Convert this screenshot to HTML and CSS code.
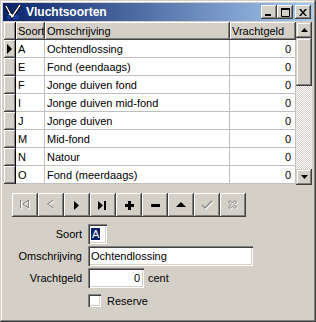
FILE: index.html
```html
<!DOCTYPE html>
<html lang="nl">
<head>
    <meta charset="UTF-8">
    <title>Vluchtsoorten</title>
    <link rel="stylesheet" href="styles.css">
</head>
<body>
    <div class="window">
        <div class="titlebar">
            <svg class="app-icon" width="16" height="16" viewBox="0 0 16 16">
                <ellipse cx="8" cy="13" rx="6" ry="2.5" fill="#1c3fa8"/>
                <path d="M1 2 L7 13 L15 1" fill="none" stroke="#000" stroke-width="3"/>
                <path d="M1 2 L7 13 L15 1" fill="none" stroke="#fff" stroke-width="1.4"/>
                <path d="M4 10 L9 12" stroke="#fff" stroke-width="1.5"/>
            </svg>
            <span class="title">Vluchtsoorten</span>
            <div class="caption-buttons">
                <button class="cap-btn">
                    <svg width="8" height="7" viewBox="0 0 8 7"><rect x="0" y="5" width="6" height="2" fill="#000"/></svg>
                </button>
                <button class="cap-btn">
                    <svg width="9" height="9" viewBox="0 0 9 9"><path d="M0.5 1.5 H8.5 V8.5 H0.5 Z" fill="none" stroke="#000"/><rect x="0" y="0" width="9" height="2" fill="#000"/></svg>
                </button>
                <button class="cap-btn close">
                    <svg width="8" height="7" viewBox="0 0 8 7"><path d="M0 0 L2 0 L4 2.5 L6 0 L8 0 L5 3.5 L8 7 L6 7 L4 4.5 L2 7 L0 7 L3 3.5 Z" fill="#000"/></svg>
                </button>
            </div>
        </div>

        <div class="grid">
            <div class="grid-table">
                <div class="ind head"></div>
                <div class="hcell">Soort</div>
                <div class="hcell">Omschrijving</div>
                <div class="hcell">Vrachtgeld</div>

                <div class="ind"><svg width="6" height="10" viewBox="0 0 6 10"><path d="M0 0 L5 5 L0 10 Z" fill="#000"/></svg></div>
                <div class="cell">A</div><div class="cell">Ochtendlossing</div><div class="cell num">0</div>
                <div class="ind"></div>
                <div class="cell">E</div><div class="cell">Fond (eendaags)</div><div class="cell num">0</div>
                <div class="ind"></div>
                <div class="cell">F</div><div class="cell">Jonge duiven fond</div><div class="cell num">0</div>
                <div class="ind"></div>
                <div class="cell">I</div><div class="cell">Jonge duiven mid-fond</div><div class="cell num">0</div>
                <div class="ind"></div>
                <div class="cell">J</div><div class="cell">Jonge duiven</div><div class="cell num">0</div>
                <div class="ind"></div>
                <div class="cell">M</div><div class="cell">Mid-fond</div><div class="cell num">0</div>
                <div class="ind"></div>
                <div class="cell">N</div><div class="cell">Natour</div><div class="cell num">0</div>
                <div class="ind"></div>
                <div class="cell">O</div><div class="cell">Fond (meerdaags)</div><div class="cell num">0</div>
            </div>
            <div class="scrollbar">
                <div class="sb-btn"><svg width="7" height="4" viewBox="0 0 7 4"><path d="M3.5 0 L7 4 L0 4 Z" fill="#000"/></svg></div>
                <div class="sb-thumb"></div>
                <div class="sb-track"></div>
                <div class="sb-btn"><svg width="7" height="4" viewBox="0 0 7 4"><path d="M0 0 L7 0 L3.5 4 Z" fill="#000"/></svg></div>
            </div>
        </div>

        <div class="navigator">
            <button class="nav-btn">
                <svg width="12" height="10" viewBox="0 0 12 10">
                    <g transform="translate(1,1)" fill="none" stroke="#fff"><path d="M1.5 0 V8"/><path d="M9.5 0 L4 4 L9.5 8 Z"/></g>
                    <g fill="none" stroke="#808080"><path d="M1.5 0 V8"/><path d="M9.5 0 L4 4 L9.5 8 Z"/></g>
                </svg>
            </button>
            <button class="nav-btn">
                <svg width="10" height="10" viewBox="0 0 10 10">
                    <path transform="translate(1,1)" d="M7.5 0 L1.5 4 L7.5 8" fill="none" stroke="#fff"/>
                    <path d="M7.5 0 L1.5 4 L7.5 8" fill="none" stroke="#808080"/>
                </svg>
            </button>
            <button class="nav-btn">
                <svg width="8" height="9" viewBox="0 0 8 9"><path d="M1 0 L6 4.5 L1 9 Z" fill="#000"/></svg>
            </button>
            <button class="nav-btn">
                <svg width="10" height="9" viewBox="0 0 10 9"><path d="M0 0 L5 4.5 L0 9 Z" fill="#000"/><rect x="6" y="0" width="2" height="9" fill="#000"/></svg>
            </button>
            <button class="nav-btn">
                <svg width="9" height="9" viewBox="0 0 9 9"><rect x="3" y="0" width="3" height="9" fill="#000"/><rect x="0" y="3" width="9" height="3" fill="#000"/></svg>
            </button>
            <button class="nav-btn">
                <svg width="9" height="3" viewBox="0 0 9 3"><rect x="0" y="0" width="9" height="3" fill="#000"/></svg>
            </button>
            <button class="nav-btn">
                <svg width="10" height="6" viewBox="0 0 10 6"><path d="M5 0 L10 5 L0 5 Z" fill="#000"/></svg>
            </button>
            <button class="nav-btn">
                <svg width="13" height="11" viewBox="0 0 13 11">
                    <path transform="translate(1,1)" d="M1 5 L4 8 L11 1" fill="none" stroke="#fff" stroke-width="1.2"/>
                    <path d="M1 5 L4 8 L11 1" fill="none" stroke="#808080" stroke-width="1.2"/>
                </svg>
            </button>
            <button class="nav-btn">
                <svg width="11" height="11" viewBox="0 0 11 11">
                    <g transform="translate(1,1)" fill="none" stroke="#fff"><path d="M0.5 2 L2 0.5 L4.5 3 L7 0.5 L8.5 2 L6 4.5 L8.5 7 L7 8.5 L4.5 6 L2 8.5 L0.5 7 L3 4.5 Z"/></g>
                    <path d="M0.5 2 L2 0.5 L4.5 3 L7 0.5 L8.5 2 L6 4.5 L8.5 7 L7 8.5 L4.5 6 L2 8.5 L0.5 7 L3 4.5 Z" fill="none" stroke="#808080"/>
                </svg>
            </button>
        </div>

        <div class="form">
            <label class="lbl">Soort</label>
            <div class="field"><div class="edit edit-code"><span class="sel">A</span></div></div>

            <label class="lbl">Omschrijving</label>
            <div class="field"><div class="edit edit-desc">Ochtendlossing</div></div>

            <label class="lbl">Vrachtgeld</label>
            <div class="field"><div class="edit edit-num">0</div><span class="unit">cent</span></div>

            <span></span>
            <div class="field check-row"><span class="checkbox"></span><span>Reserve</span></div>
        </div>
    </div>
</body>
</html>
```

FILE: styles.css
```css
body {
    margin: 0;
    font-family: "Liberation Sans", Arial, sans-serif;
    font-size: 11px;
    color: #000;
    background: #d4d0c8;
}

.window {
    width: 316px;
    height: 322px;
    box-sizing: border-box;
    padding: 3px;
    background: #d4d0c8;
    box-shadow: inset -1px -1px #404040, inset 1px 1px #d4d0c8, inset -2px -2px #808080, inset 2px 2px #fff;
}

/* title bar */
.titlebar {
    height: 18px;
    display: flex;
    align-items: center;
    background: linear-gradient(to right, #0a246a, #a6caf0);
    color: #fff;
    padding: 0 2px;
}

.app-icon {
    margin-right: 5px;
}

.title {
    font-weight: bold;
    font-size: 12px;
    flex: 1;
}

.caption-buttons {
    display: flex;
    align-items: center;
}

.cap-btn {
    width: 16px;
    height: 14px;
    padding: 0;
    border: none;
    background: #d4d0c8;
    display: flex;
    align-items: center;
    justify-content: center;
    box-shadow: inset -1px -1px #404040, inset 1px 1px #fff, inset -2px -2px #808080;
}

.cap-btn.close {
    margin-left: 2px;
}

/* data grid */
.grid {
    display: flex;
    margin: 1px 1px 0 1px;
    height: 163px;
    background: #d4d0c8;
}

.grid-table {
    display: grid;
    grid-template-columns: 12px 29px 185px 66px;
    grid-auto-rows: 18px;
    align-content: start;
    background: #d4d0c8;
}

.ind {
    box-sizing: border-box;
    background: #d4d0c8;
    box-shadow: inset 1px 1px #fff, inset -1px -1px #808080;
    border-right: 1px solid #000;
    border-bottom: 1px solid #404040;
    display: flex;
    align-items: center;
    justify-content: center;
}

.hcell {
    box-sizing: border-box;
    background: #d4d0c8;
    box-shadow: inset 1px 1px #fff, inset -1px -1px #808080;
    border-bottom: 1px solid #404040;
    border-right: 1px solid #404040;
    padding: 2px 2px 0;
    line-height: 14px;
    white-space: nowrap;
    overflow: hidden;
}

.cell {
    box-sizing: border-box;
    background: #fff;
    border-right: 1px solid #c0c0c0;
    border-bottom: 1px solid #c0c0c0;
    padding: 2px 2px 0;
    line-height: 14px;
    white-space: nowrap;
}

.cell.num {
    text-align: right;
    padding-right: 4px;
}

.scrollbar {
    width: 16px;
    display: flex;
    flex-direction: column;
}

.sb-btn {
    height: 16px;
    background: #d4d0c8;
    display: flex;
    align-items: center;
    justify-content: center;
    box-shadow: inset -1px -1px #404040, inset 1px 1px #d4d0c8, inset -2px -2px #808080, inset 2px 2px #fff;
}

.sb-thumb {
    height: 48px;
    background: #d4d0c8;
    box-shadow: inset -1px -1px #404040, inset 1px 1px #d4d0c8, inset -2px -2px #808080, inset 2px 2px #fff;
}

.sb-track {
    flex: 1;
    background: repeating-conic-gradient(#d4d0c8 0 25%, #fff 0 50%) 0 0 / 2px 2px;
}

/* navigator */
.navigator {
    display: flex;
    margin: 8px 0 0 9px;
}

.nav-btn {
    width: 26px;
    height: 24px;
    padding: 0;
    border: none;
    background: #d4d0c8;
    display: flex;
    align-items: center;
    justify-content: center;
    box-shadow: inset -1px -1px #404040, inset 1px 1px #fff, inset -2px -2px #808080;
}

/* edit form */
.form {
    display: grid;
    grid-template-columns: 79px 1fr;
    column-gap: 6px;
    row-gap: 2px;
    grid-auto-rows: 20px;
    margin-top: 7px;
}

.lbl {
    text-align: right;
    line-height: 20px;
}

.field {
    display: flex;
    align-items: center;
    gap: 4px;
}

.edit {
    box-sizing: border-box;
    height: 20px;
    background: #fff;
    padding: 3px 3px 0;
    line-height: 14px;
    white-space: nowrap;
    box-shadow: inset 1px 1px #808080, inset 2px 2px #404040, inset -1px -1px #fff, inset -2px -2px #d4d0c8;
}

.edit-code {
    width: 19px;
}

.sel {
    background: #0a246a;
    color: #fff;
    padding: 0 1px;
}

.edit-desc {
    width: 165px;
}

.edit-num {
    width: 56px;
    text-align: right;
    padding-right: 4px;
}

.check-row {
    margin-top: 4px;
    height: 13px;
    gap: 6px;
}

.checkbox {
    width: 13px;
    height: 13px;
    box-sizing: border-box;
    background: #fff;
    box-shadow: inset 1px 1px #808080, inset 2px 2px #404040, inset -1px -1px #fff, inset -2px -2px #d4d0c8;
}
```
